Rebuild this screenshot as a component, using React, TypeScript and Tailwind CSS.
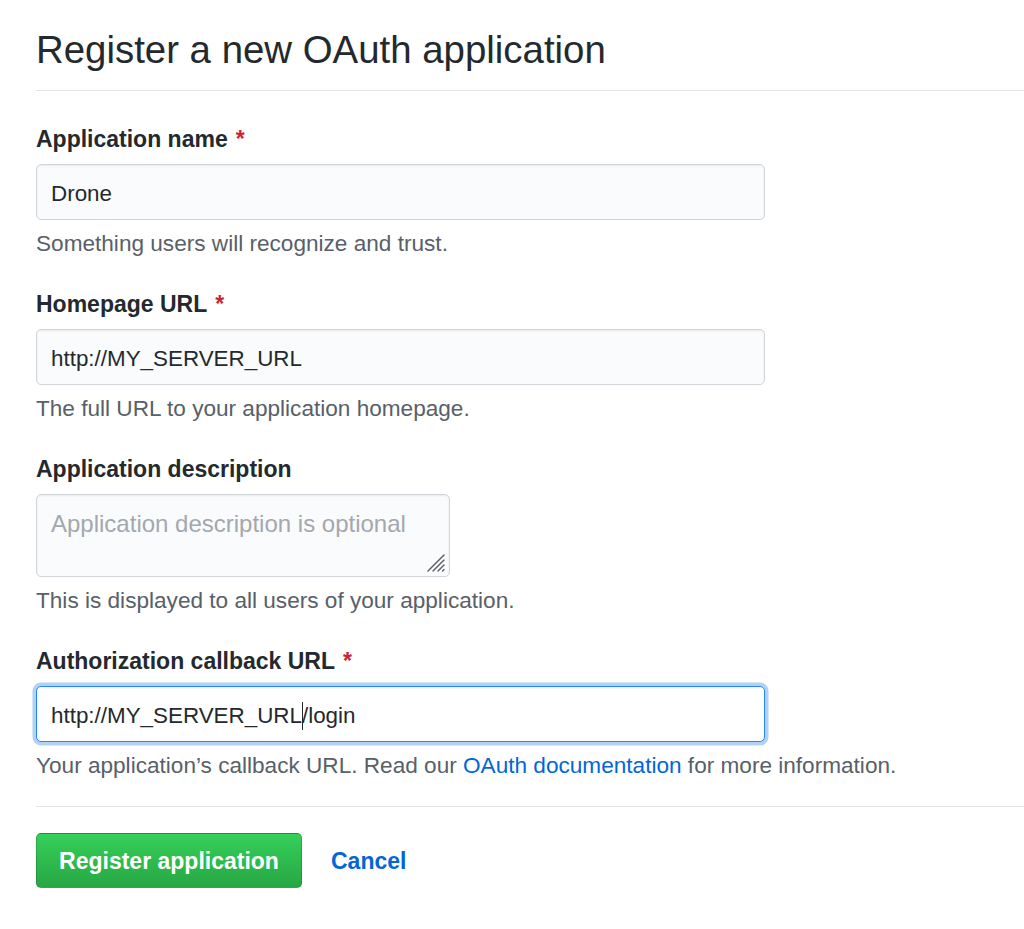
import React from "react";

const font = "font-['Liberation_Sans',Arial,Helvetica,sans-serif]";

function Label({ text, required }: { text: string; required?: boolean }) {
  return (
    <div className="text-[23px] leading-[30px] font-bold text-[#24292e]">
      {text}
      {required && <span className="text-[#cb2431] ml-[8px]">*</span>}
    </div>
  );
}

function Hint({ children }: { children: React.ReactNode }) {
  return <div className="mt-[10px] text-[22.6px] leading-[28px] text-[#586069]">{children}</div>;
}

export default function App() {
  return (
    <div className={`${font} bg-white min-h-[929px] w-full overflow-hidden pl-[36px]`}>
      <div className="pt-[26px] pb-[16px] border-b border-[#e1e4e8]">
        <h2 className="text-[38.4px] leading-[48px] font-normal text-[#24292e]">Register a new OAuth application</h2>
      </div>

      <div className="mt-[33px]">
        <Label text="Application name" required />
        <div className="mt-[10px] w-[729px] h-[56px] rounded-[5px] border border-[#d1d5da] bg-[#fafbfc] shadow-[inset_0_1px_2px_rgba(27,31,35,0.075)] flex items-center pl-[14px] pt-[3px] text-[22.4px] leading-[30px] text-[#24292e]">
          Drone
        </div>
        <Hint>Something users will recognize and trust.</Hint>
      </div>

      <div className="mt-[31px]">
        <Label text="Homepage URL" required />
        <div className="mt-[10px] w-[729px] h-[56px] rounded-[5px] border border-[#d1d5da] bg-[#fafbfc] shadow-[inset_0_1px_2px_rgba(27,31,35,0.075)] flex items-center pl-[14px] pt-[3px] text-[22.4px] leading-[30px] text-[#24292e]">
          http://MY_SERVER_URL
        </div>
        <Hint>The full URL to your application homepage.</Hint>
      </div>

      <div className="mt-[31px]">
        <Label text="Application description" />
        <div className="relative mt-[10px] w-[414px] h-[83px] rounded-[5px] border border-[#d1d5da] bg-[#fafbfc] shadow-[inset_0_1px_2px_rgba(27,31,35,0.075)] pl-[14px] pt-[14px] text-[24px] leading-[30px] text-[#a3a8ae]">
          Application description is optional
          <svg className="absolute right-[2px] bottom-[2px]" width="22" height="22" viewBox="0 0 22 22">
            <g stroke="#5a5f66" strokeWidth="1.4" strokeLinecap="round">
              <line x1="3" y1="19" x2="19" y2="3" />
              <line x1="8" y1="19" x2="19" y2="8" />
              <line x1="13" y1="19" x2="19" y2="13" />
              <line x1="17.5" y1="19" x2="19" y2="17.5" />
            </g>
          </svg>
        </div>
        <Hint>This is displayed to all users of your application.</Hint>
      </div>

      <div className="mt-[31px]">
        <Label text="Authorization callback URL" required />
        <div className="mt-[10px] w-[729px] h-[56px] rounded-[5px] border border-[#2188ff] bg-white shadow-[0_0_0_3.5px_rgba(3,102,214,0.3)] flex items-center pl-[14px] pt-[3px] text-[22.4px] leading-[30px] text-[#24292e]">
          <span>http://MY_SERVER_URL</span>
          <span className="inline-block w-[1.5px] h-[28px] bg-[#24292e] -mr-[1.5px]" />
          <span>/login</span>
        </div>
        <Hint>
          Your application’s callback URL. Read our{" "}
          <span className="text-[#0366d6]">OAuth documentation</span> for more information.
        </Hint>
      </div>

      <div className="mt-[26px] border-t border-[#e1e4e8]" />

      <div className="mt-[26px] flex items-center">
        <button className="w-[266px] h-[55px] rounded-[5px] border border-[rgba(27,31,35,0.2)] bg-gradient-to-b from-[#34d058] to-[#28a745] text-white text-[23px] font-bold flex items-center justify-center pt-[2px]">
          Register application
        </button>
        <span className="ml-[29px] pt-[2px] text-[23px] font-bold text-[#0366d6]">Cancel</span>
      </div>
    </div>
  );
}
